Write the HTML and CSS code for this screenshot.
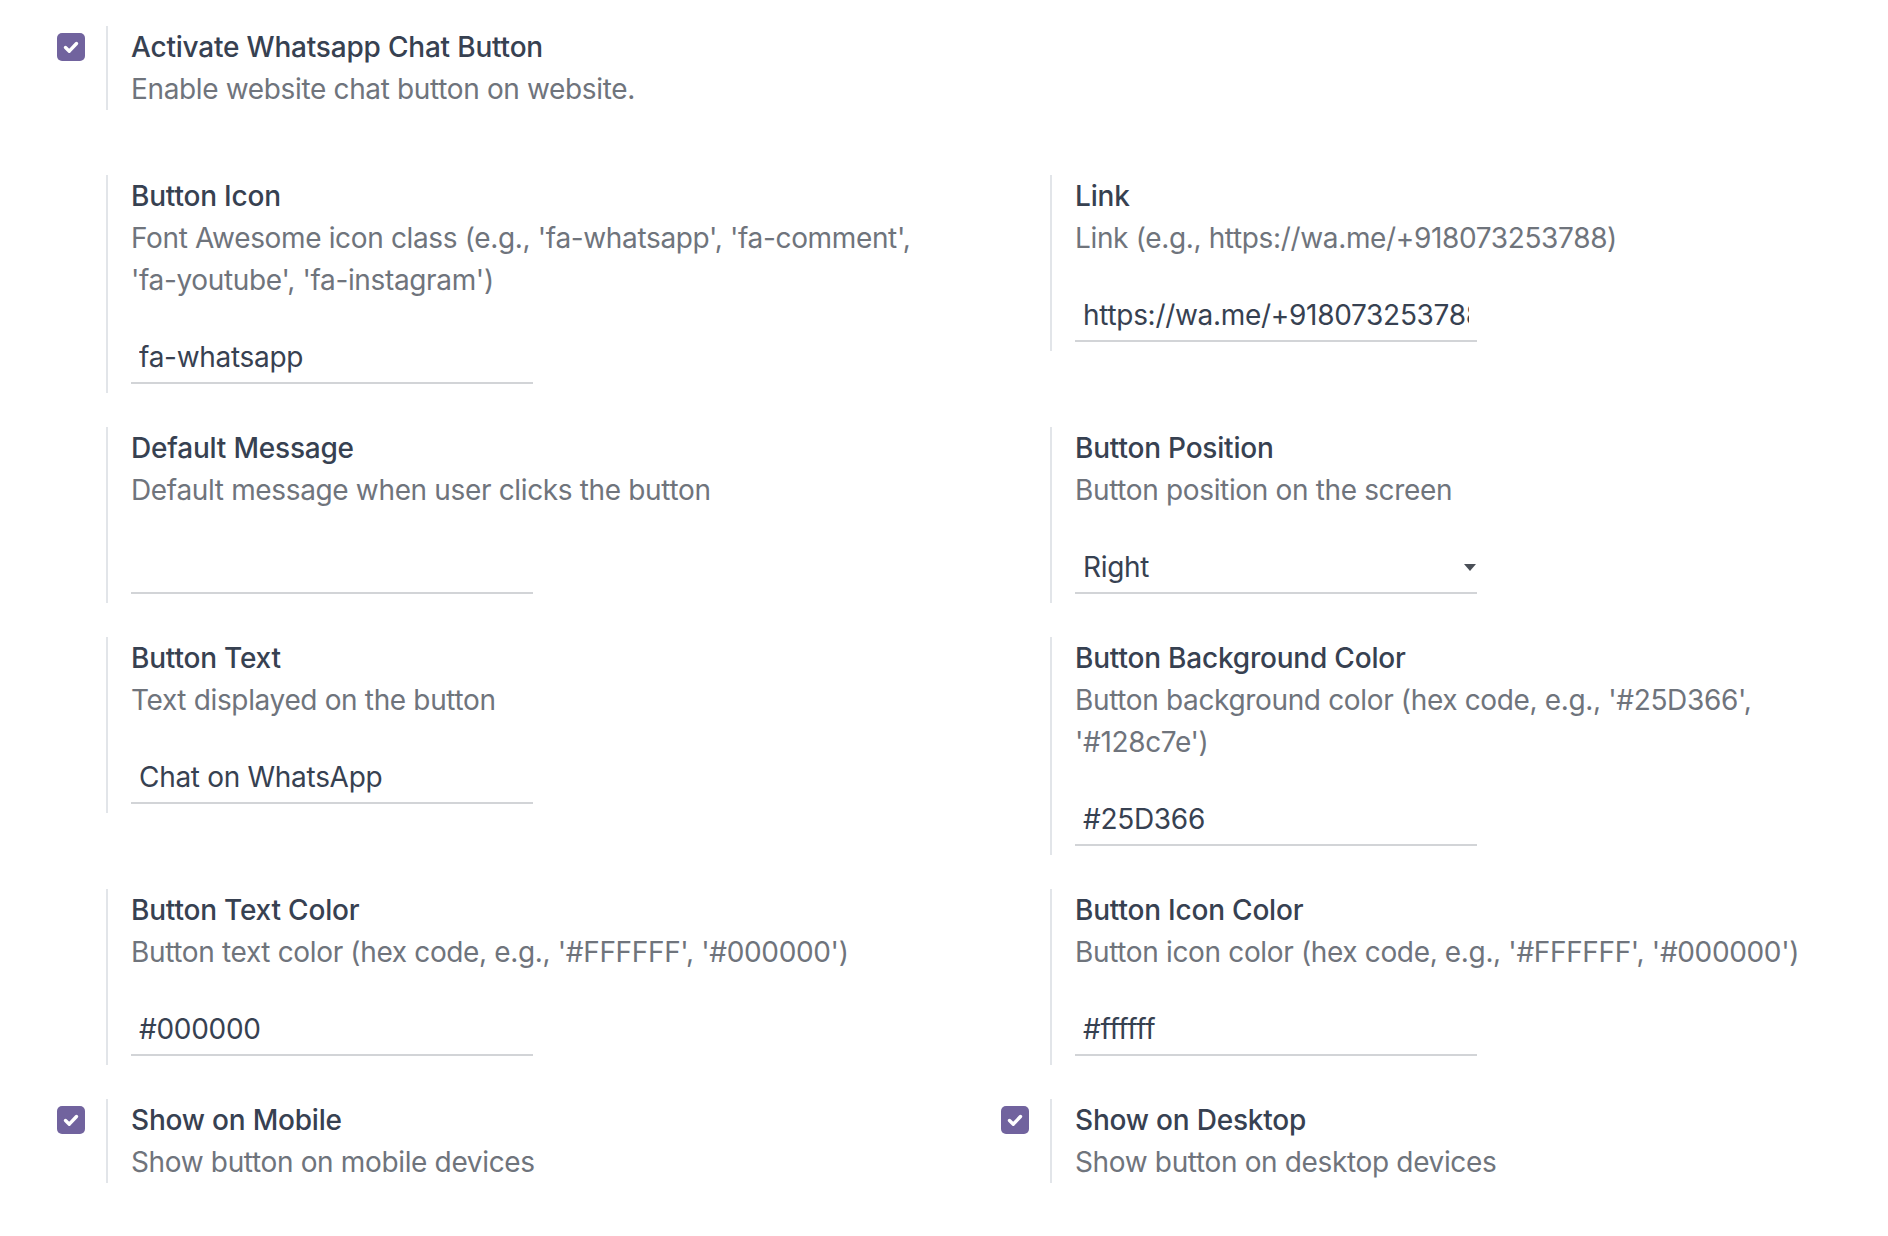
FILE: index.html
```html
<!DOCTYPE html>
<html lang="en">
<head>
<meta charset="utf-8">
<title>WhatsApp Chat Button Settings</title>
<link rel="stylesheet" href="styles.css">
</head>
<body>
<div class="page">
  <div class="setting top-setting">
    <div class="left-pane">
      <svg class="cb" viewBox="0 0 28 28" width="28" height="28"><rect x="0" y="0" width="28" height="28" rx="5" fill="#71639e"/><path d="M8.5 14.5 L12.3 18.2 L19.5 10.5" fill="none" stroke="#fff" stroke-width="3.4" stroke-linecap="round" stroke-linejoin="round"/></svg>
    </div>
    <div class="right-pane">
      <div class="label">Activate Whatsapp Chat Button</div>
      <div class="muted">Enable website chat button on website.</div>
    </div>
  </div>

  <div class="grid">
    <div class="setting">
      <div class="left-pane"></div>
      <div class="right-pane">
        <div class="label">Button Icon</div>
        <div class="muted">Font Awesome icon class (e.g., <span class="nw">'fa-whatsapp',</span> <span class="nw">'fa-comment',</span> <span class="nw">'fa-youtube',</span> <span class="nw">'fa-instagram')</span></div>
        <div class="field"><input class="o-input" type="text" value="fa-whatsapp"></div>
      </div>
    </div>
    <div class="setting">
      <div class="left-pane"></div>
      <div class="right-pane">
        <div class="label">Link</div>
        <div class="muted">Link (e.g., https://wa.me/+918073253788)</div>
        <div class="field"><input class="o-input" type="text" value="https://wa.me/+918073253788"></div>
      </div>
    </div>

    <div class="setting">
      <div class="left-pane"></div>
      <div class="right-pane">
        <div class="label">Default Message</div>
        <div class="muted">Default message when user clicks the button</div>
        <div class="field"><input class="o-input" type="text" value=""></div>
      </div>
    </div>
    <div class="setting">
      <div class="left-pane"></div>
      <div class="right-pane">
        <div class="label">Button Position</div>
        <div class="muted">Button position on the screen</div>
        <div class="field"><div class="o-select"><span>Right</span><span class="caret"></span></div></div>
      </div>
    </div>

    <div class="setting">
      <div class="left-pane"></div>
      <div class="right-pane">
        <div class="label">Button Text</div>
        <div class="muted">Text displayed on the button</div>
        <div class="field"><input class="o-input" type="text" value="Chat on WhatsApp"></div>
      </div>
    </div>
    <div class="setting">
      <div class="left-pane"></div>
      <div class="right-pane">
        <div class="label">Button Background Color</div>
        <div class="muted">Button background color (hex code, e.g., '#25D366', <span class="nw">'#128c7e')</span></div>
        <div class="field"><input class="o-input" type="text" value="#25D366"></div>
      </div>
    </div>

    <div class="setting">
      <div class="left-pane"></div>
      <div class="right-pane">
        <div class="label">Button Text Color</div>
        <div class="muted">Button text color (hex code, e.g., '#FFFFFF', '#000000')</div>
        <div class="field"><input class="o-input" type="text" value="#000000"></div>
      </div>
    </div>
    <div class="setting">
      <div class="left-pane"></div>
      <div class="right-pane">
        <div class="label">Button Icon Color</div>
        <div class="muted">Button icon color (hex code, e.g., '#FFFFFF', '#000000')</div>
        <div class="field"><input class="o-input" type="text" value="#ffffff"></div>
      </div>
    </div>

    <div class="setting">
      <div class="left-pane">
        <svg class="cb" viewBox="0 0 28 28" width="28" height="28"><rect x="0" y="0" width="28" height="28" rx="5" fill="#71639e"/><path d="M8.5 14.5 L12.3 18.2 L19.5 10.5" fill="none" stroke="#fff" stroke-width="3.4" stroke-linecap="round" stroke-linejoin="round"/></svg>
      </div>
      <div class="right-pane">
        <div class="label">Show on Mobile</div>
        <div class="muted">Show button on mobile devices</div>
      </div>
    </div>
    <div class="setting">
      <div class="left-pane">
        <svg class="cb" viewBox="0 0 28 28" width="28" height="28"><rect x="0" y="0" width="28" height="28" rx="5" fill="#71639e"/><path d="M8.5 14.5 L12.3 18.2 L19.5 10.5" fill="none" stroke="#fff" stroke-width="3.4" stroke-linecap="round" stroke-linejoin="round"/></svg>
      </div>
      <div class="right-pane">
        <div class="label">Show on Desktop</div>
        <div class="muted">Show button on desktop devices</div>
      </div>
    </div>
  </div>
</div>
</body>
</html>
```
FILE: styles.css
```css
* { box-sizing: border-box; }

html, body {
  margin: 0;
  padding: 0;
  background: #ffffff;
}

body {
  font-family: Inter, "Noto Sans", "Liberation Sans", sans-serif;
  font-size: 28px;
  line-height: 42px;
  color: #374151;
}

.page {
  padding-top: 26px;
  width: 1888px;
}

.setting {
  display: flex;
  align-items: stretch;
}

.top-setting {
  width: 944px;
}

.left-pane {
  width: 106px;
  flex: 0 0 106px;
  padding-left: 57px;
  padding-top: 7px;
}

.cb {
  display: block;
}

.right-pane {
  flex: 1 1 auto;
  border-left: 2px solid #e2e5e9;
  padding-left: 23px;
  padding-right: 30px;
}

.label {
  font-weight: 500;
  color: #374151;
  letter-spacing: -0.2px;
}

.muted {
  color: #6f747c;
  letter-spacing: -0.35px;
}

.nw {
  white-space: nowrap;
}

.grid {
  margin-top: 65px;
  display: grid;
  grid-template-columns: 944px 944px;
  row-gap: 34px;
  align-items: start;
}

.field {
  margin-top: 28px;
  padding-bottom: 9px;
}

.o-input {
  display: block;
  width: 402px;
  height: 55px;
  margin: 0;
  padding: 7px 8px 4px;
  border: none;
  border-bottom: 2px solid #d2d4d7;
  border-radius: 0;
  outline: none;
  background: transparent;
  font-family: inherit;
  font-size: 28px;
  line-height: 42px;
  letter-spacing: -0.3px;
  color: #374151;
}

.o-select {
  display: flex;
  align-items: center;
  justify-content: space-between;
  width: 402px;
  height: 55px;
  padding: 7px 1px 4px 8px;
  border-bottom: 2px solid #d2d4d7;
  color: #374151;
  letter-spacing: -0.3px;
}

.caret {
  width: 0;
  height: 0;
  border-left: 6px solid transparent;
  border-right: 6px solid transparent;
  border-top: 7px solid #4a4f57;
}
```
